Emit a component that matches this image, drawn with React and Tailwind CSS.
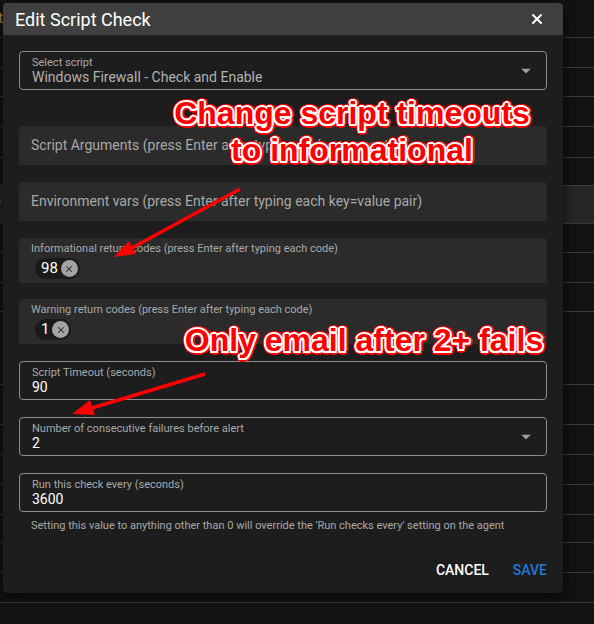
import React from 'react';
import { X } from 'lucide-react';

// background table rows peeking out around the modal
const rows = [38, 30, 29, 30, 31, 28, 38, 29, 30, 29, 73, 40, 30, 30, 30, 28, 30, 30];

const annotation =
  'font-["Liberation_Sans",Arial,sans-serif] font-bold text-[32px] leading-[37px] text-[#ff0000] text-center whitespace-nowrap ' +
  '[text-shadow:2px_0_0_#fff,-2px_0_0_#fff,0_2px_0_#fff,0_-2px_0_#fff,1.5px_1.5px_0_#fff,-1.5px_1.5px_0_#fff,1.5px_-1.5px_0_#fff,-1.5px_-1.5px_0_#fff,3.5px_0_0_#f00,-3.5px_0_0_#f00,0_3.5px_0_#f00,0_-3.5px_0_#f00,2.5px_2.5px_0_#f00,-2.5px_2.5px_0_#f00,2.5px_-2.5px_0_#f00,-2.5px_-2.5px_0_#f00]';

const Caret = () => (
  <svg width="10" height="5" viewBox="0 0 10 5" className="absolute right-[15px] top-1/2 -translate-y-1/2">
    <path d="M0 0 L10 0 L5 5 Z" fill="#9e9e9e" />
  </svg>
);

const Chip = ({ value }) => (
  <div className="inline-flex items-center h-[21px] rounded-full bg-[#1a1a1a] pl-[6px] pr-[2px] gap-[3px]">
    <span className="text-[15px] text-white leading-none">{value}</span>
    <span className="w-[17px] h-[17px] rounded-full bg-[#a3a3a3] flex items-center justify-center">
      <X size={10} strokeWidth={2.5} color="#2a2a2a" />
    </span>
  </div>
);

const Outlined = ({ label, value, valueClass = 'text-white', caret, className = '' }) => (
  <div className={`relative h-[39px] border border-[#8c8c8c] rounded-[4px] pl-[12px] flex flex-col justify-center ${className}`}>
    <div className="text-[11px] leading-[13px] text-[#a8a8a8]">{label}</div>
    <div className={`text-[14px] leading-[17px] ${valueClass}`}>{value}</div>
    {caret && <Caret />}
  </div>
);

const Filled = ({ label, className = '' }) => (
  <div className={`h-[39px] bg-[#2b2b2b] rounded-t-[4px] pl-[12px] flex items-center text-[14px] text-[#a8a8a8] ${className}`}>
    {label}
  </div>
);

const ChipField = ({ label, value, className = '' }) => (
  <div className={`h-[45px] bg-[#2b2b2b] rounded-t-[4px] pl-[12px] pt-[4px] ${className}`}>
    <div className="text-[11px] leading-[13px] text-[#a8a8a8]">{label}</div>
    <div className="mt-[1px] pl-[4px]">
      <Chip value={value} />
    </div>
  </div>
);

export default function App() {
  return (
    <div className="relative w-[594px] h-[624px] bg-[#141414] overflow-hidden font-['Roboto','Noto_Sans',sans-serif]">
      {/* page table behind the modal */}
      <div className="flex flex-col">
        {rows.map((h, i) => (
          <div
            key={i}
            style={{ height: h }}
            className={`border-b border-[#3a3a3a] flex items-center text-[14px] ${i === 6 ? 'bg-[#262626]' : 'bg-[#121212]'}`}
          >
            {i === 0 && <span className="-ml-[5px] text-[#d38b3a]">it</span>}
            {i === 6 && <span className="-ml-[4px] text-[#b8894a]">r</span>}
          </div>
        ))}
      </div>

      {/* modal */}
      <div className="absolute left-[3px] top-[3px] w-[560px] h-[590px] rounded-[4px] bg-[#1d1d1d] shadow-[0_4px_12px_rgba(0,0,0,0.7)] flex flex-col">
        <div className="h-[32px] shrink-0 bg-[#3f3f3f] rounded-t-[4px] pl-[12px] pr-[18px] flex items-center justify-between">
          <span className="text-[18px] text-white">Edit Script Check</span>
          <X size={16} strokeWidth={3} color="#ffffff" />
        </div>

        <div className="px-[16px] flex flex-col">
          <Outlined
            className="mt-[16px] h-[39px]"
            label="Select script"
            value="Windows Firewall - Check and Enable"
            valueClass="text-[#b3b3b3]"
            caret
          />
          <Filled className="mt-[36px]" label="Script Arguments (press Enter after typing each argument)" />
          <Filled className="mt-[17px]" label="Environment vars (press Enter after typing each key=value pair)" />
          <ChipField className="mt-[17px]" label="Informational return codes (press Enter after typing each code)" value="98" />
          <ChipField className="mt-[16px]" label="Warning return codes (press Enter after typing each code)" value="1" />
          <Outlined className="mt-[17px] h-[38px]" label="Script Timeout (seconds)" value="90" />
          <Outlined className="mt-[17px]" label="Number of consecutive failures before alert" value="2" caret />
          <Outlined className="mt-[17px]" label="Run this check every (seconds)" value="3600" />
          <div className="mt-[7px] pl-[12px] text-[11px] leading-[14px] text-[#a8a8a8]">
            Setting this value to anything other than 0 will override the 'Run checks every' setting on the agent
          </div>
        </div>

        <div className="mt-[19px] flex justify-end items-center gap-[24px] pr-[16px] h-[36px] text-[14px] font-medium">
          <span className="text-white">CANCEL</span>
          <span className="text-[#1f7bd6]">SAVE</span>
        </div>
      </div>

      {/* screenshot annotations */}
      <div className={`absolute left-[152px] top-[95px] w-[400px] ${annotation}`}>
        Change script timeouts
        <br />
        to informational
      </div>
      <div className={`absolute left-[164px] top-[322px] w-[400px] ${annotation}`}>
        Only email after 2+ fails
      </div>
      <svg className="absolute left-0 top-0" width="594" height="624" viewBox="0 0 594 624">
        <line x1="240" y1="189" x2="130" y2="249" stroke="#ff0000" strokeWidth="3.5" />
        <polygon points="114,257 129,241 136,254" fill="#ff0000" />
        <line x1="205" y1="374" x2="92" y2="408" stroke="#ff0000" strokeWidth="3.5" />
        <polygon points="72,414 90,400 95,415" fill="#ff0000" />
      </svg>
    </div>
  );
}
